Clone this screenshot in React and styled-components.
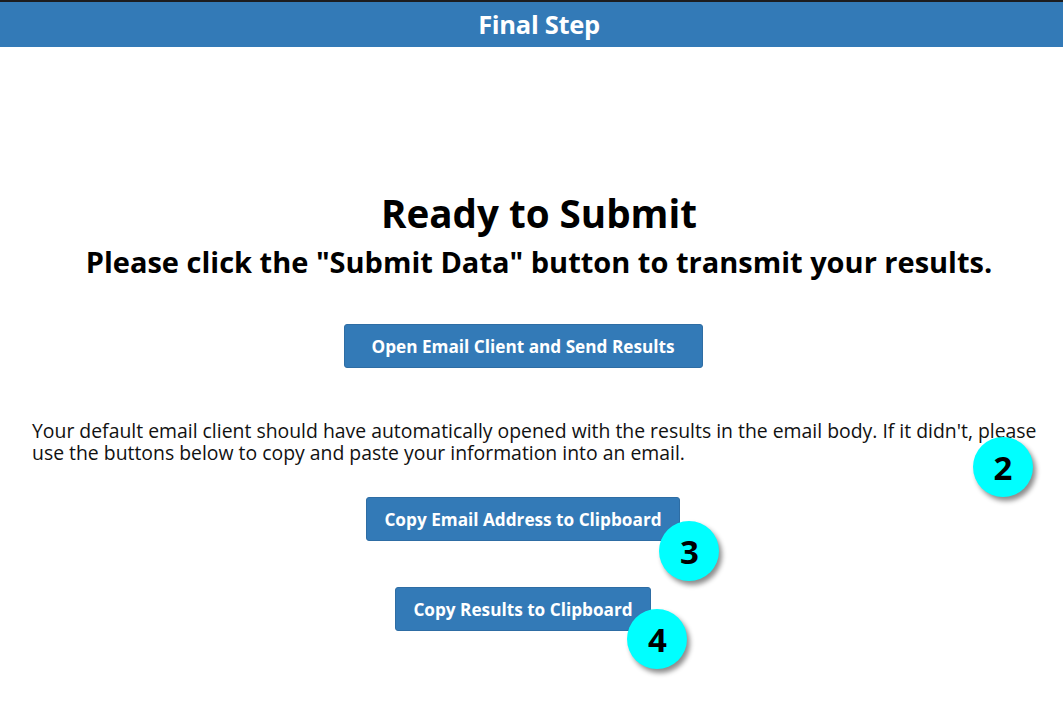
import React from "react";
import styled, { createGlobalStyle } from "styled-components";

const Global = createGlobalStyle`
  html, body { margin: 0; padding: 0; background: #fff; }
  body { font-family: "Open Sans", "DejaVu Sans", sans-serif; color: #111; }
`;

const Page = styled.div`
  width: 1063px;
  min-height: 722px;
  display: flex;
  flex-direction: column;
`;

const Header = styled.header`
  border-top: 2px solid #1d1d1f;
  background: #337ab7;
  color: #fff;
  display: flex;
  align-items: center;
  justify-content: center;
  padding: 0 0 2px 15px;
  box-sizing: border-box;
  height: 47px;
  font-size: 25.5px;
  font-weight: 700;
  letter-spacing: -0.3px;
`;

const Content = styled.main`
  padding: 143px 32px 0;
  display: flex;
  flex-direction: column;
  align-items: center;
`;

const Heading = styled.div`
  display: flex;
  flex-direction: column;
  align-items: center;
  padding-left: 15px;
`;

const Title = styled.h1`
  margin: 0;
  font-size: 38.6px;
  line-height: 46px;
  font-weight: 700;
  color: #000;
`;

const Subtitle = styled.h2`
  margin: 8px 0 0;
  font-size: 29px;
  line-height: 36px;
  font-weight: 700;
  color: #000;
  white-space: nowrap;
`;

const Button = styled.button`
  font-family: "Open Sans", sans-serif;
  font-size: 17.2px;
  font-weight: 700;
  color: #fff;
  background: #337ab7;
  border: 1px solid #2e6da4;
  border-radius: 3px;
  height: 44px;
  padding: 0 ${(p) => p.$pad || 17}px;
  cursor: pointer;
  white-space: nowrap;
`;

const Anchor = styled.div`
  position: relative;
  margin-top: ${(p) => p.$mt || 0}px;
  margin-right: ${(p) => (p.$stretch ? -16 : 17)}px;
  align-self: ${(p) => (p.$stretch ? "stretch" : "center")};
`;

const Text = styled.p`
  margin: 0;
  font-size: 19.4px;
  line-height: 22px;
  color: #111;
`;

const Badge = styled.div`
  position: absolute;
  left: ${(p) => p.$x}px;
  top: ${(p) => p.$y}px;
  width: 60px;
  height: 60px;
  border-radius: 50%;
  background: #00ffff;
  box-shadow: 3px 4px 5px rgba(0, 0, 0, 0.45);
  display: flex;
  align-items: center;
  justify-content: center;
  font-size: 33px;
  font-weight: 700;
  color: #000;
`;

export default function App() {
  return (
    <>
      <Global />
      <Page>
        <Header>Final Step</Header>
        <Content>
          <Heading>
            <Title>Ready to Submit</Title>
            <Subtitle>Please click the "Submit Data" button to transmit your results.</Subtitle>
          </Heading>
          <Anchor $mt={44}>
            <Button $pad={27}>Open Email Client and Send Results</Button>
          </Anchor>
          <Anchor $mt={52} $stretch>
            <Text>
              Your default email client should have automatically opened with the results in the email body. If it didn't, please use the buttons below to copy and paste your information into an email.
            </Text>
            <Badge $x={941} $y={17}>2</Badge>
          </Anchor>
          <Anchor $mt={33}>
            <Button $pad={17}>Copy Email Address to Clipboard</Button>
            <Badge $x={293} $y={24}>3</Badge>
          </Anchor>
          <Anchor $mt={46}>
            <Button $pad={17}>Copy Results to Clipboard</Button>
            <Badge $x={232} $y={22}>4</Badge>
          </Anchor>
        </Content>
      </Page>
    </>
  );
}
